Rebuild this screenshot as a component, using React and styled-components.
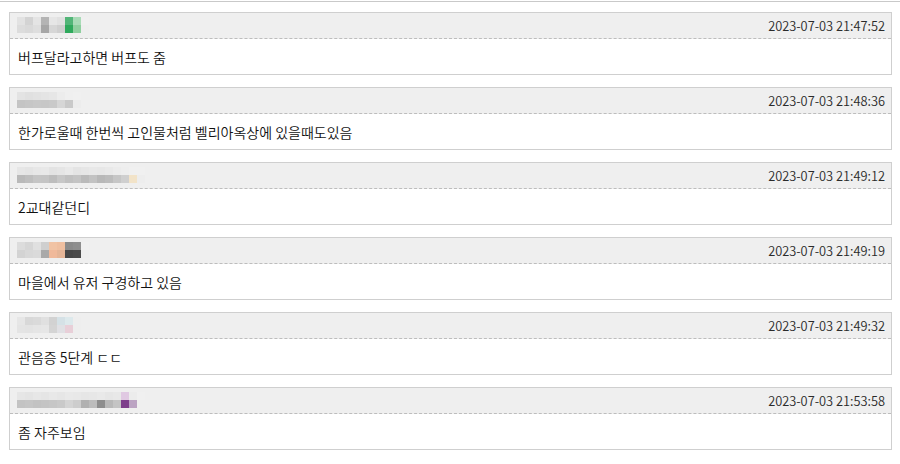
import styled, { createGlobalStyle } from "styled-components";

const GlobalStyle = createGlobalStyle`
    html, body {
        margin: 0;
        padding: 0;
        background: #fff;
    }
    body {
        font-family: "Noto Sans CJK KR", "Noto Sans", sans-serif;
        color: #222;
    }
`;

const comments = [
    {
        date: "2023-07-03 21:47:52",
        text: "버프달라고하면 버프도 줌",
        mosaic: [
            ["#e2e2e2", "#d3d3d3", "#e4e4e4", "#b4b4b4", "#e6e6e6", "#e1e1e1", "#52b578", "#a9dbb7", "#f0f0f0"],
            ["#dcdcdc", "#d9d9d9", "#dedede", "#a6a6a6", "#d6d6d6", "#cfcfcf", "#2ea95c", "#8fcf9f", "#eeeeee"],
        ],
    },
    {
        date: "2023-07-03 21:48:36",
        text: "한가로울때 한번씩 고인물처럼 벨리아옥상에 있을때도있음",
        mosaic: [
            ["#e3e3e3", "#e0e0e0", "#e2e2e2", "#e4e4e4", "#e6e6e6", "#ececec", "#efefef", "#f0f0f0"],
            ["#c4c4c4", "#c6c6c6", "#c8c8c8", "#c7c7c7", "#c9c9c9", "#d6d6d6", "#c9c9c9", "#ececec"],
        ],
    },
    {
        date: "2023-07-03 21:49:12",
        text: "2교대같던디",
        mosaic: [
            ["#e6e6e6", "#e4e4e4", "#e7e7e7", "#e8e8e8", "#e3e3e3", "#e5e5e5", "#e9e9e9", "#e4e4e4", "#e6e6e6", "#e8e8e8", "#e7e7e7", "#e9e9e9", "#ececec", "#eeeeee", "#f0f0f0", "#f0f0f0"],
            ["#b9b9b9", "#bebebe", "#c5c5c5", "#c4c4c4", "#bdbdbd", "#c7c7c7", "#c0c0c0", "#c4c4c4", "#bababa", "#c2c2c2", "#b8b8b8", "#bcbcbc", "#c6c6c6", "#cfcfcf", "#f2e3c8", "#ededed"],
        ],
    },
    {
        date: "2023-07-03 21:49:19",
        text: "마을에서 유저 구경하고 있음",
        mosaic: [
            ["#dcdcdc", "#d6d6d6", "#e0e0e0", "#cfcfcf", "#f1c3a4", "#efbfa0", "#8a8a8a", "#8e8e8e", "#f0f0f0"],
            ["#d3d3d3", "#d8d8d8", "#dadada", "#a9a9a9", "#f0b99a", "#e5b597", "#474747", "#4a4a4a", "#eeeeee"],
        ],
    },
    {
        date: "2023-07-03 21:49:32",
        text: "관음증 5단계 ㄷㄷ",
        mosaic: [
            ["#e6e6e6", "#d8d8d8", "#dadada", "#e0e0e0", "#d2d2d2", "#d5e1e6", "#dde9ec", "#eeeeee"],
            ["#e4e4e4", "#e3e3e3", "#e5e5e5", "#e6e6e6", "#d4d4d4", "#e0e0e4", "#e8cfd8", "#eeeeee"],
        ],
    },
    {
        date: "2023-07-03 21:53:58",
        text: "좀 자주보임",
        mosaic: [
            ["#e6e6e6", "#e4e4e4", "#e7e7e7", "#e5e5e5", "#e8e8e8", "#e6e6e6", "#e9e9e9", "#e8e8e8", "#e6e6e6", "#e7e7e7", "#e9e9e9", "#e6e6e6", "#e8e8e8", "#e0c9e2", "#ececec", "#f0f0f0"],
            ["#c3c3c3", "#c5c5c5", "#c2c2c2", "#c4c4c4", "#c6c6c6", "#c9c9c9", "#d4d4d4", "#cdcdcd", "#b1b1b1", "#bcbcbc", "#8d8d8d", "#b8b8b8", "#c4c4c4", "#7e3f8b", "#bba3c2", "#efefef"],
        ],
    },
];

const Mosaic = ({ rows }) => (
    <MosaicGrid $cols={rows[0].length}>
        {rows.flat().map((color, i) => (
            <Cell key={i} $color={color} />
        ))}
    </MosaicGrid>
);

const App = () => (
    <>
        <GlobalStyle />
        <Page>
            <List>
                {comments.map((c, i) => (
                    <Card key={i}>
                        <Header>
                            <Mosaic rows={c.mosaic} />
                            <DateText>{c.date}</DateText>
                        </Header>
                        <Body>{c.text}</Body>
                    </Card>
                ))}
            </List>
        </Page>
    </>
);

const Page = styled.div`
    width: 900px;
    min-height: 464px;
    padding-top: 1px;
    box-sizing: border-box;
`;

const List = styled.div`
    border-top: 1px solid #c9c9c9;
    padding: 10px 8px 0 9px;
    display: flex;
    flex-direction: column;
    gap: 12px;
`;

const Card = styled.div`
    border: 1px solid #cfcfcf;
    background: #fff;
`;

const Header = styled.div`
    background: #efefef;
    border-bottom: 1px dashed #bdbdbd;
    display: flex;
    justify-content: space-between;
    align-items: flex-start;
    padding: 4px 6px 0 7px;
    height: 21px;
`;

const MosaicGrid = styled.div`
    display: grid;
    grid-template-columns: repeat(${(p) => p.$cols}, 8px);
    grid-auto-rows: 8px;
`;

const Cell = styled.div`
    background: ${(p) => p.$color};
`;

const DateText = styled.span`
    font-size: 12.8px;
    font-weight: 350;
    line-height: 18px;
    color: #2a2a2a;
`;

const Body = styled.div`
    height: 35px;
    display: flex;
    align-items: center;
    padding-left: 8px;
    font-size: 14px;
    font-weight: 350;
    color: #111;
`;

export default App;
